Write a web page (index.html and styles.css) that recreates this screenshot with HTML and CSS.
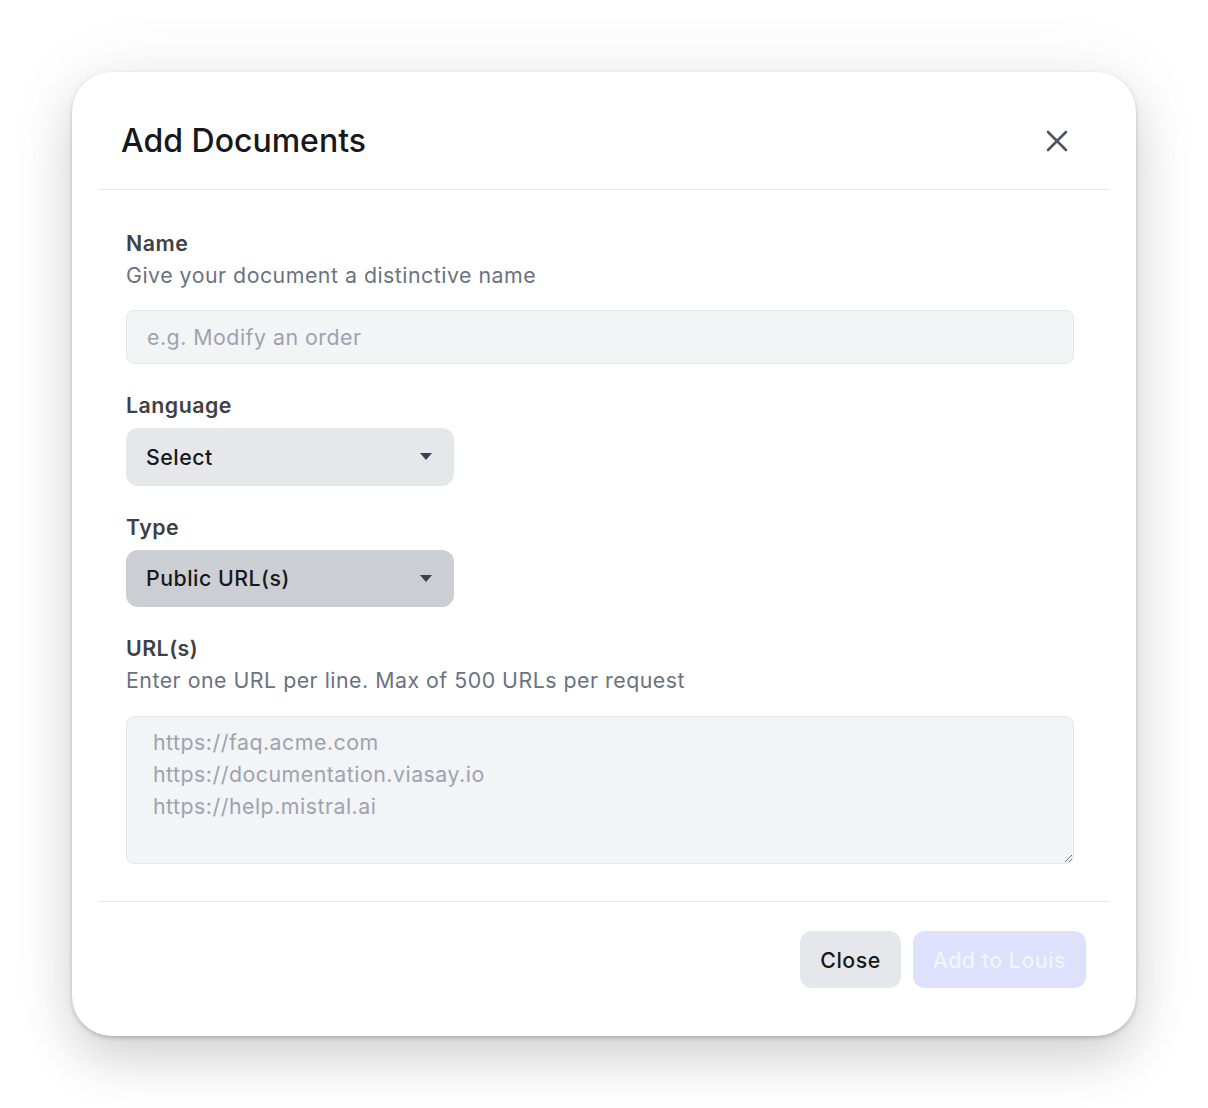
FILE: index.html
```html
<!DOCTYPE html>
<html lang="en">
<head>
<meta charset="utf-8">
<title>Add Documents</title>
<link rel="stylesheet" href="styles.css">
</head>
<body>
<div class="modal" role="dialog" aria-labelledby="modal-title">
  <header class="modal-header">
    <h2 id="modal-title" class="modal-title">Add Documents</h2>
    <button class="icon-btn" type="button" aria-label="Close">
      <svg width="24" height="24" viewBox="0 0 24 24" fill="none" stroke="#4b5563" stroke-width="2.6" stroke-linecap="round">
        <path d="M3 3 L21 21 M21 3 L3 21"/>
      </svg>
    </button>
  </header>
  <div class="modal-body">
    <div class="field">
      <label class="label" for="doc-name">Name</label>
      <p class="desc">Give your document a distinctive name</p>
      <input id="doc-name" class="input" type="text" placeholder="e.g. Modify an order">
    </div>
    <div class="field">
      <label class="label">Language</label>
      <div class="select">
        <span>Select</span>
        <span class="caret"></span>
      </div>
    </div>
    <div class="field">
      <label class="label">Type</label>
      <div class="select select-active">
        <span>Public URL(s)</span>
        <span class="caret"></span>
      </div>
    </div>
    <div class="field">
      <label class="label" for="doc-urls">URL(s)</label>
      <p class="desc">Enter one URL per line. Max of 500 URLs per request</p>
      <textarea id="doc-urls" class="textarea" placeholder="https://faq.acme.com&#10;https://documentation.viasay.io&#10;https://help.mistral.ai"></textarea>
    </div>
  </div>
  <footer class="modal-footer">
    <button class="btn btn-secondary" type="button">Close</button>
    <button class="btn btn-primary" type="button" disabled>Add to Louis</button>
  </footer>
</div>
</body>
</html>
```

FILE: styles.css
```css
* {
  box-sizing: border-box;
}

html, body {
  margin: 0;
  background: #ffffff;
}

body {
  padding: 72px;
  font-family: Inter, "Noto Sans", "Liberation Sans", sans-serif;
  color: #111827;
}

.modal {
  background: #ffffff;
  border-radius: 40px;
  padding: 26px;
  box-shadow: 0 0 70px rgba(0, 0, 0, 0.07), 0 26px 50px rgba(0, 0, 0, 0.14), 0 2px 4px rgba(0, 0, 0, 0.2);
}

.modal-header {
  display: flex;
  align-items: center;
  justify-content: space-between;
  padding: 21px 33px 27px 23px;
  border-bottom: 1px solid #e5e7eb;
}

.modal-title {
  margin: 0;
  font-size: 32px;
  line-height: 43px;
  font-weight: 500;
  color: #18181b;
}

.icon-btn {
  width: 40px;
  height: 40px;
  display: flex;
  align-items: center;
  justify-content: center;
  padding: 0;
  border: none;
  background: transparent;
  cursor: pointer;
}

.modal-body {
  padding: 37px 36px 37px 28px;
  display: flex;
  flex-direction: column;
  gap: 25px;
  border-bottom: 1px solid #e5e7eb;
}

.field {
  display: flex;
  flex-direction: column;
}

.label {
  font-size: 21.33px;
  line-height: 32px;
  font-weight: 600;
  letter-spacing: 0.5px;
  color: #3f3f46;
  margin-bottom: 7px;
}

.label + .desc {
  margin-top: -7px;
}

.desc {
  margin: 0 0 19px;
  font-size: 21.33px;
  line-height: 32px;
  letter-spacing: 0.5px;
  color: #6b7280;
}

.input {
  height: 54px;
  padding: 0 20px;
  border: 1px solid #e5e7eb;
  border-radius: 8px;
  background: #f3f4f6;
  font-family: inherit;
  font-size: 21.33px;
  letter-spacing: 0.5px;
  color: #111827;
}

.input::placeholder,
.textarea::placeholder {
  color: #9ca3af;
  opacity: 1;
}

.select {
  width: 328px;
  height: 57.5px;
  display: flex;
  align-items: center;
  justify-content: space-between;
  padding: 0 22px 0 20px;
  border-radius: 12px;
  background: #e5e7eb;
  font-size: 21.33px;
  font-weight: 500;
  letter-spacing: 0.5px;
  color: #18181b;
}

.select-active {
  background: #cbcfd4;
}

.caret {
  width: 0;
  height: 0;
  border-left: 6.5px solid transparent;
  border-right: 6.5px solid transparent;
  border-top: 7px solid #374151;
}

.desc + .textarea {
  margin-top: 1px;
}

.textarea {
  height: 148px;
  padding: 9px 26px;
  border: 1px solid #e5e7eb;
  border-radius: 8px;
  background: #f3f4f6;
  font-family: inherit;
  font-size: 21.33px;
  line-height: 32px;
  letter-spacing: 0.5px;
  color: #111827;
  resize: vertical;
}

.modal-footer {
  display: flex;
  justify-content: flex-end;
  gap: 12px;
  padding: 29px 24px 22px;
}

.btn {
  height: 57px;
  padding: 0 20px;
  border: none;
  border-radius: 12px;
  font-family: inherit;
  font-size: 21.33px;
  font-weight: 500;
  letter-spacing: 0.5px;
  cursor: pointer;
}

.btn-secondary {
  background: #e5e7eb;
  color: #18181b;
}

.btn-primary {
  background: #dde1fb;
  color: #f3f5ff;
}
```
